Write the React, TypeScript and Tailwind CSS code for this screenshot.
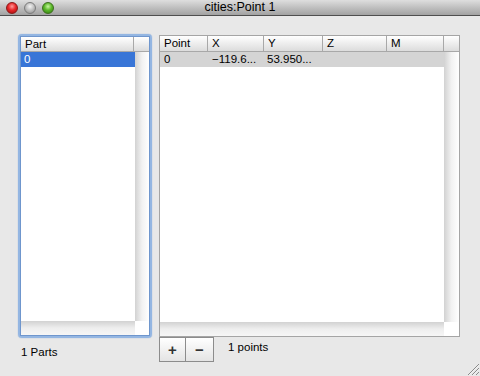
import React from "react";

const font = { fontFamily: '"Liberation Sans", Arial, sans-serif' };

function Light({ kind }: { kind: "red" | "gray" | "green" }) {
  const cls =
    kind === "red"
      ? "bg-[radial-gradient(circle_at_50%_35%,#ff9c9c_0%,#e8282a_45%,#a30a0a_100%)] border-[#8a1a1a]"
      : kind === "green"
      ? "bg-[radial-gradient(circle_at_50%_35%,#c8f5a0_0%,#5cb82a_45%,#2f7a10_100%)] border-[#3c6e1c]"
      : "bg-[radial-gradient(circle_at_50%_35%,#f4f4f4_0%,#bdbdbd_50%,#8a8a8a_100%)] border-[#7c7c7c]";
  return <div className={`w-[12px] h-[12px] rounded-full border ${cls}`} />;
}

function HeadCell({ w, label, last }: { w?: string; label?: string; last?: boolean }) {
  return (
    <div
      className={`${w ?? "flex-1"} h-full ${last ? "" : "border-r border-[#a8a8a8]"} pl-[4px] text-[11.5px] leading-[15px] text-black`}
    >
      {label}
    </div>
  );
}

export default function App() {
  return (
    <div className="w-[480px] h-[376px] bg-[#e8e8e8] flex flex-col relative overflow-hidden" style={font}>
      {/* title bar */}
      <div className="h-[16px] shrink-0 bg-gradient-to-b from-[#dedede] to-[#a2a2a2] border-b border-[#4e4e4e] relative flex items-center">
        <div className="flex items-center gap-[6px] pl-[6px]">
          <Light kind="red" />
          <Light kind="gray" />
          <Light kind="green" />
        </div>
        <div className="absolute left-0 right-0 top-0 h-[15px] flex items-center justify-center text-[12.5px] text-black leading-none">
          cities:Point 1
        </div>
      </div>

      {/* content */}
      <div className="flex flex-row pl-[18px] pt-[18px] gap-[7px]">
        {/* left column */}
        <div className="w-[134px] flex flex-col">
          <div className="h-[304px] rounded-[4px] border-2 border-[#94b6e2] shadow-[0_0_1px_#6d97d2]">
            <div className="h-full w-full border border-[#6f96cd] bg-white flex flex-col">
              {/* header */}
              <div className="h-[15px] shrink-0 flex bg-gradient-to-b from-white to-[#dcdcdc] border-b border-[#a8a8a8]">
                <HeadCell w="w-[113px]" label="Part" />
                <HeadCell last />
              </div>
              {/* body */}
              <div className="flex-1 flex">
                <div className="flex-1 bg-white">
                  <div className="h-[15px] bg-[#3875d7] text-white text-[11.5px] leading-[15px] pl-[3px]">0</div>
                </div>
                <div className="w-[14px] bg-gradient-to-r from-[#d2d2d2] via-[#f2f2f2] to-white" />
              </div>
              <div className="h-[14px] shrink-0 flex">
                <div className="flex-1 bg-gradient-to-b from-[#d2d2d2] via-[#eeeeee] to-[#f6f6f6]" />
                <div className="w-[14px] bg-white" />
              </div>
            </div>
          </div>
          <div className="pl-[3px] pt-[8px] text-[11.5px] leading-[13px] text-black">1 Parts</div>
        </div>

        {/* right column */}
        <div className="w-[301px] flex flex-col mt-[1px]">
          <div className="h-[302px] border border-[#a5a5a5] bg-white flex flex-col">
            <div className="h-[16px] shrink-0 flex bg-gradient-to-b from-white to-[#dcdcdc] border-b border-[#a8a8a8]">
              <HeadCell w="w-[48px]" label="Point" />
              <HeadCell w="w-[56px]" label="X" />
              <HeadCell w="w-[59px]" label="Y" />
              <HeadCell w="w-[64px]" label="Z" />
              <HeadCell w="w-[57px]" label="M" />
              <HeadCell last />
            </div>
            <div className="flex-1 flex">
              <div className="flex-1 bg-white">
                <div className="h-[15px] bg-[#d4d4d4] flex text-[11.5px] leading-[15px] text-black">
                  <div className="w-[48px] pl-[4px]">0</div>
                  <div className="w-[56px] pl-[4px]">−119.6...</div>
                  <div className="w-[59px] pl-[3px]">53.950...</div>
                </div>
              </div>
              <div className="w-[15px] bg-gradient-to-r from-[#d2d2d2] via-[#f2f2f2] to-white" />
            </div>
            <div className="h-[14px] shrink-0 flex">
              <div className="flex-1 bg-gradient-to-b from-[#d2d2d2] via-[#eeeeee] to-[#f6f6f6]" />
              <div className="w-[15px] bg-white" />
            </div>
          </div>
          <div className="flex items-start">
            <div className="flex">
              <div className="w-[27px] h-[25px] border border-[#8c8c8c] bg-gradient-to-b from-white to-[#e4e4e4] flex items-center justify-center text-[15px] font-bold text-[#333] leading-none">
                +
              </div>
              <div className="w-[28px] h-[25px] border border-l-0 border-[#8c8c8c] bg-gradient-to-b from-white to-[#e4e4e4] flex items-center justify-center text-[15px] font-bold text-[#333] leading-none">
                −
              </div>
            </div>
            <div className="ml-[14px] mt-[4px] text-[11.5px] leading-[13px] text-black">1 points</div>
          </div>
        </div>
      </div>

      {/* resize grip */}
      <svg className="absolute right-[1px] bottom-[1px]" width="12" height="12" viewBox="0 0 12 12">
        <line x1="1" y1="12" x2="12" y2="1" stroke="#8a8a8a" strokeWidth="1" />
        <line x1="5" y1="12" x2="12" y2="5" stroke="#8a8a8a" strokeWidth="1" />
        <line x1="9" y1="12" x2="12" y2="9" stroke="#8a8a8a" strokeWidth="1" />
        <line x1="2" y1="12" x2="12" y2="2" stroke="#ffffff" strokeWidth="0.7" opacity="0.6" />
        <line x1="6" y1="12" x2="12" y2="6" stroke="#ffffff" strokeWidth="0.7" opacity="0.6" />
      </svg>
    </div>
  );
}
